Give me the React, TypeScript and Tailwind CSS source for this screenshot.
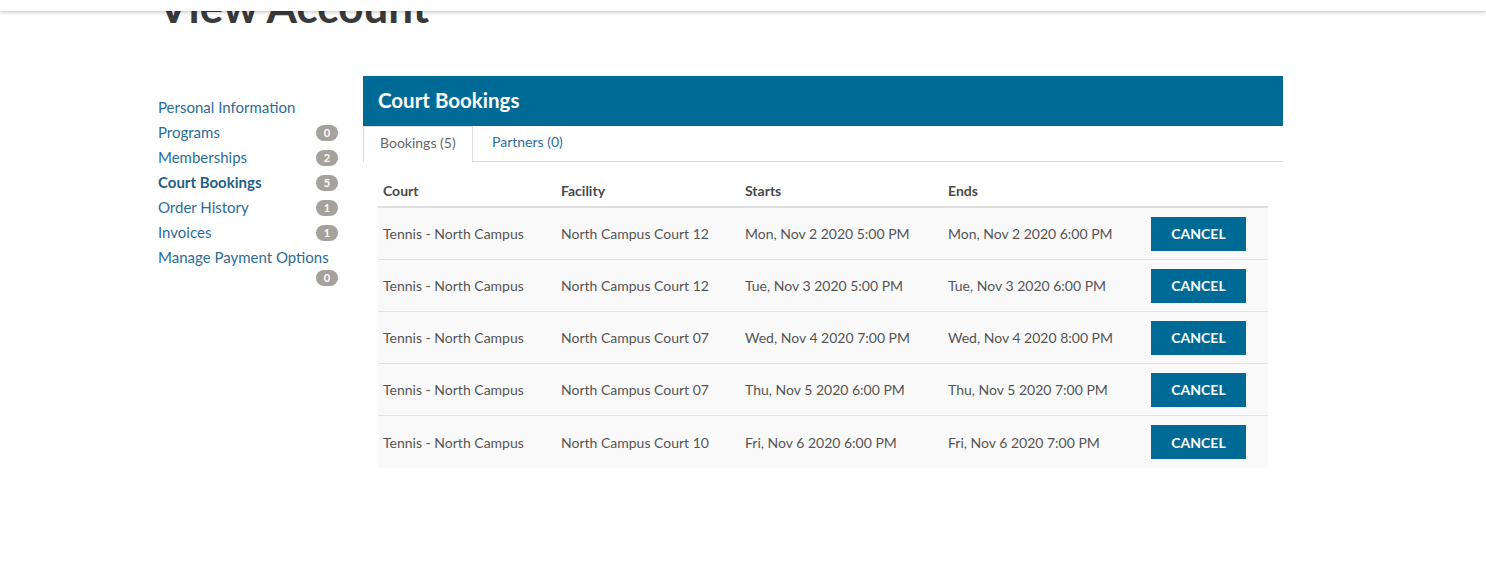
import React from "react";

const rows = [
  ["Tennis - North Campus", "North Campus Court 12", "Mon, Nov 2 2020 5:00 PM", "Mon, Nov 2 2020 6:00 PM"],
  ["Tennis - North Campus", "North Campus Court 12", "Tue, Nov 3 2020 5:00 PM", "Tue, Nov 3 2020 6:00 PM"],
  ["Tennis - North Campus", "North Campus Court 07", "Wed, Nov 4 2020 7:00 PM", "Wed, Nov 4 2020 8:00 PM"],
  ["Tennis - North Campus", "North Campus Court 07", "Thu, Nov 5 2020 6:00 PM", "Thu, Nov 5 2020 7:00 PM"],
  ["Tennis - North Campus", "North Campus Court 10", "Fri, Nov 6 2020 6:00 PM", "Fri, Nov 6 2020 7:00 PM"],
];

const nav: { label: string; count?: number; active?: boolean }[] = [
  { label: "Personal Information" },
  { label: "Programs", count: 0 },
  { label: "Memberships", count: 2 },
  { label: "Court Bookings", count: 5, active: true },
  { label: "Order History", count: 1 },
  { label: "Invoices", count: 1 },
  { label: "Manage Payment Options", count: 0 },
];

export default function App() {
  return (
    <div
      className="relative w-full h-[566px] bg-white overflow-hidden"
      style={{ fontFamily: "Lato, 'Open Sans', sans-serif" }}
    >
      <div className="absolute top-0 left-0 right-0 h-[11px] bg-white z-10 shadow-[0_1px_4px_rgba(0,0,0,0.25)]" />
      <div className="pl-[158px]">
        <h1 className="text-[44px] leading-[48px] font-bold text-[#3a3a3a] mt-[-18px] h-[48px]">
          View Account
        </h1>
        <div className="flex mt-[46px]">
          <div className="w-[180px] pt-[19px] shrink-0">
            {nav.map((n) => (
              <div key={n.label} className="flex flex-wrap items-center justify-between min-h-[25px]">
                <span
                  className={`text-[15px] leading-[25px] ${
                    n.active ? "font-bold text-[#1f5f85]" : "text-[#2c6d98]"
                  }`}
                >
                  {n.label}
                </span>
                {n.count !== undefined && (
                  <span className="ml-auto w-[22px] h-[16px] rounded-full bg-[#a7a19b] text-white text-[11px] font-bold leading-[16px] text-center">
                    {n.count}
                  </span>
                )}
              </div>
            ))}
          </div>
          <div className="ml-[25px] w-[920px]">
            <div className="h-[50px] bg-[#006a96] flex items-center px-[15px] pb-[2px]">
              <span className="text-white font-bold text-[20.5px]">Court Bookings</span>
            </div>
            <div className="flex h-[36px] border-b border-[#dddddd]">
              <div className="w-[110px] h-[36px] border-l border-r border-t border-[#dddddd] bg-white flex items-center pl-[16px] pb-[4px] text-[14px] text-[#666666]">
                Bookings (5)
              </div>
              <div className="flex items-center pl-[19px] pb-[4px] text-[14px] text-[#2c6d98]">Partners (0)</div>
            </div>
            <div className="mx-[15px] mt-[10px]">
              <div className="grid grid-cols-[178px_184px_203px_203px_1fr] pl-[5px] h-[36px] pt-[2px] items-center border-b-2 border-[#dddddd] text-[14px] font-bold text-[#4a4a4a]">
                <div>Court</div>
                <div>Facility</div>
                <div>Starts</div>
                <div>Ends</div>
                <div />
              </div>
              {rows.map((r, i) => (
                <div
                  key={i}
                  className={`grid grid-cols-[178px_184px_203px_203px_1fr] pl-[5px] h-[52px] items-center bg-[#f9f9f9] text-[14px] text-[#555555] ${
                    i < rows.length - 1 ? "border-b border-[#e2e2e2]" : ""
                  }`}
                >
                  <div>{r[0]}</div>
                  <div>{r[1]}</div>
                  <div>{r[2]}</div>
                  <div>{r[3]}</div>
                  <div>
                    <button className="w-[95px] h-[34px] bg-[#006a96] text-white font-bold text-[14px]">
                      CANCEL
                    </button>
                  </div>
                </div>
              ))}
            </div>
          </div>
        </div>
      </div>
    </div>
  );
}
